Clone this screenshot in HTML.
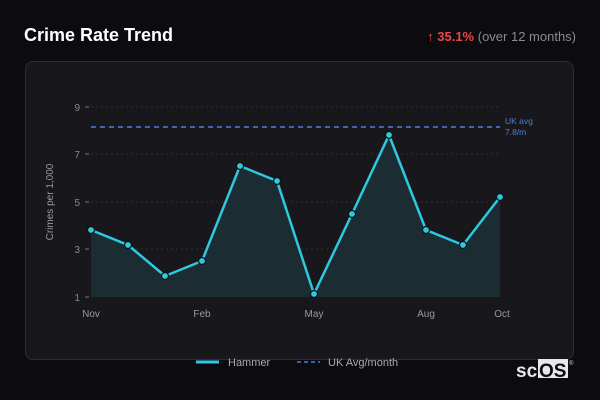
<!DOCTYPE html>
<html><head><meta charset="utf-8"><style>
body{margin:0;width:600px;height:400px;background:#0c0c10;font-family:"Liberation Sans",sans-serif;position:relative;overflow:hidden}
.t{position:absolute;left:24px;top:25px;color:#fff;font-weight:bold;font-size:18px}
.c{position:absolute;right:24px;top:29px;font-size:13px;color:#8a8a90}
.c b{color:#e5484d}
.card{position:absolute;left:25px;top:61px;width:549px;height:299px;background:#18181c;border:1px solid #2c2c31;border-radius:8px;box-sizing:border-box}
svg{position:absolute;left:0;top:0}
</style></head><body>
<div class="t">Crime Rate Trend</div>
<div class="c"><b>↑ 35.1%</b> (over 12 months)</div>
<div class="card"></div>
<svg width="600" height="400" font-family="Liberation Sans, sans-serif">
<g stroke="#2e2e33" stroke-dasharray="2 3" stroke-width="1">
<line x1="91" y1="107" x2="500" y2="107"/><line x1="91" y1="154" x2="500" y2="154"/><line x1="91" y1="202" x2="500" y2="202"/><line x1="91" y1="249" x2="500" y2="249"/>
</g>
<g fill="#888" font-size="10" text-anchor="end">
<text x="80" y="111">9</text><text x="80" y="158">7</text><text x="80" y="206">5</text><text x="80" y="253">3</text><text x="80" y="301">1</text>
</g>
<g stroke="#777"><line x1="85" y1="107" x2="89" y2="107"/><line x1="85" y1="154" x2="89" y2="154"/><line x1="85" y1="202" x2="89" y2="202"/><line x1="85" y1="249" x2="89" y2="249"/><line x1="85" y1="297" x2="89" y2="297"/></g>
<text x="53" y="202" fill="#999" font-size="10" text-anchor="middle" transform="rotate(-90 53 202)">Crimes per 1,000</text>
<path d="M91 230 L128 245 L165 276 L202 261 L240 166 L277 181 L314 294 L352 214 L389 135 L426 230 L463 245 L500 197 L500 297 L91 297Z" fill="#1b2d33"/>
<line x1="91" y1="127" x2="500" y2="127" stroke="#4a7fd8" stroke-width="1.5" stroke-dasharray="5 4"/>
<text x="505" y="124" fill="#4a7fd8" font-size="8.5">UK avg</text><text x="505" y="135" fill="#4a7fd8" font-size="8.5">7.8/m</text>
<polyline points="91,230 128,245 165,276 202,261 240,166 277,181 314,294 352,214 389,135 426,230 463,245 500,197" fill="none" stroke="#2ec9e0" stroke-width="2.5" stroke-linejoin="round"/>
<g fill="#2ec9e0" stroke="#0e1114" stroke-width="1.2">
<circle cx="91" cy="230" r="3.5"/><circle cx="128" cy="245" r="3.5"/><circle cx="165" cy="276" r="3.5"/><circle cx="202" cy="261" r="3.5"/><circle cx="240" cy="166" r="3.5"/><circle cx="277" cy="181" r="3.5"/><circle cx="314" cy="294" r="3.5"/><circle cx="352" cy="214" r="3.5"/><circle cx="389" cy="135" r="3.5"/><circle cx="426" cy="230" r="3.5"/><circle cx="463" cy="245" r="3.5"/><circle cx="500" cy="197" r="3.5"/>
</g>
<g fill="#999" font-size="10" text-anchor="middle">
<text x="91" y="317">Nov</text><text x="202" y="317">Feb</text><text x="314" y="317">May</text><text x="426" y="317">Aug</text><text x="502" y="317">Oct</text>
</g>
<line x1="196" y1="362" x2="219" y2="362" stroke="#2ec9e0" stroke-width="3"/>
<text x="228" y="366" fill="#aaa" font-size="11">Hammer</text>
<line x1="297" y1="362" x2="320" y2="362" stroke="#4a7fd8" stroke-width="1.5" stroke-dasharray="4 3"/>
<text x="328" y="366" fill="#aaa" font-size="11">UK Avg/month</text>
<rect x="538" y="359" width="30" height="19" fill="#e8e8e8"/>
<text x="516" y="377" fill="#e8e8e8" font-size="19" font-weight="bold">sc</text>
<text x="539" y="377" fill="#0c0c10" font-size="19" font-weight="bold">OS</text>
<text x="569" y="365" fill="#ccc" font-size="6">®</text>
</svg>
</body></html>
